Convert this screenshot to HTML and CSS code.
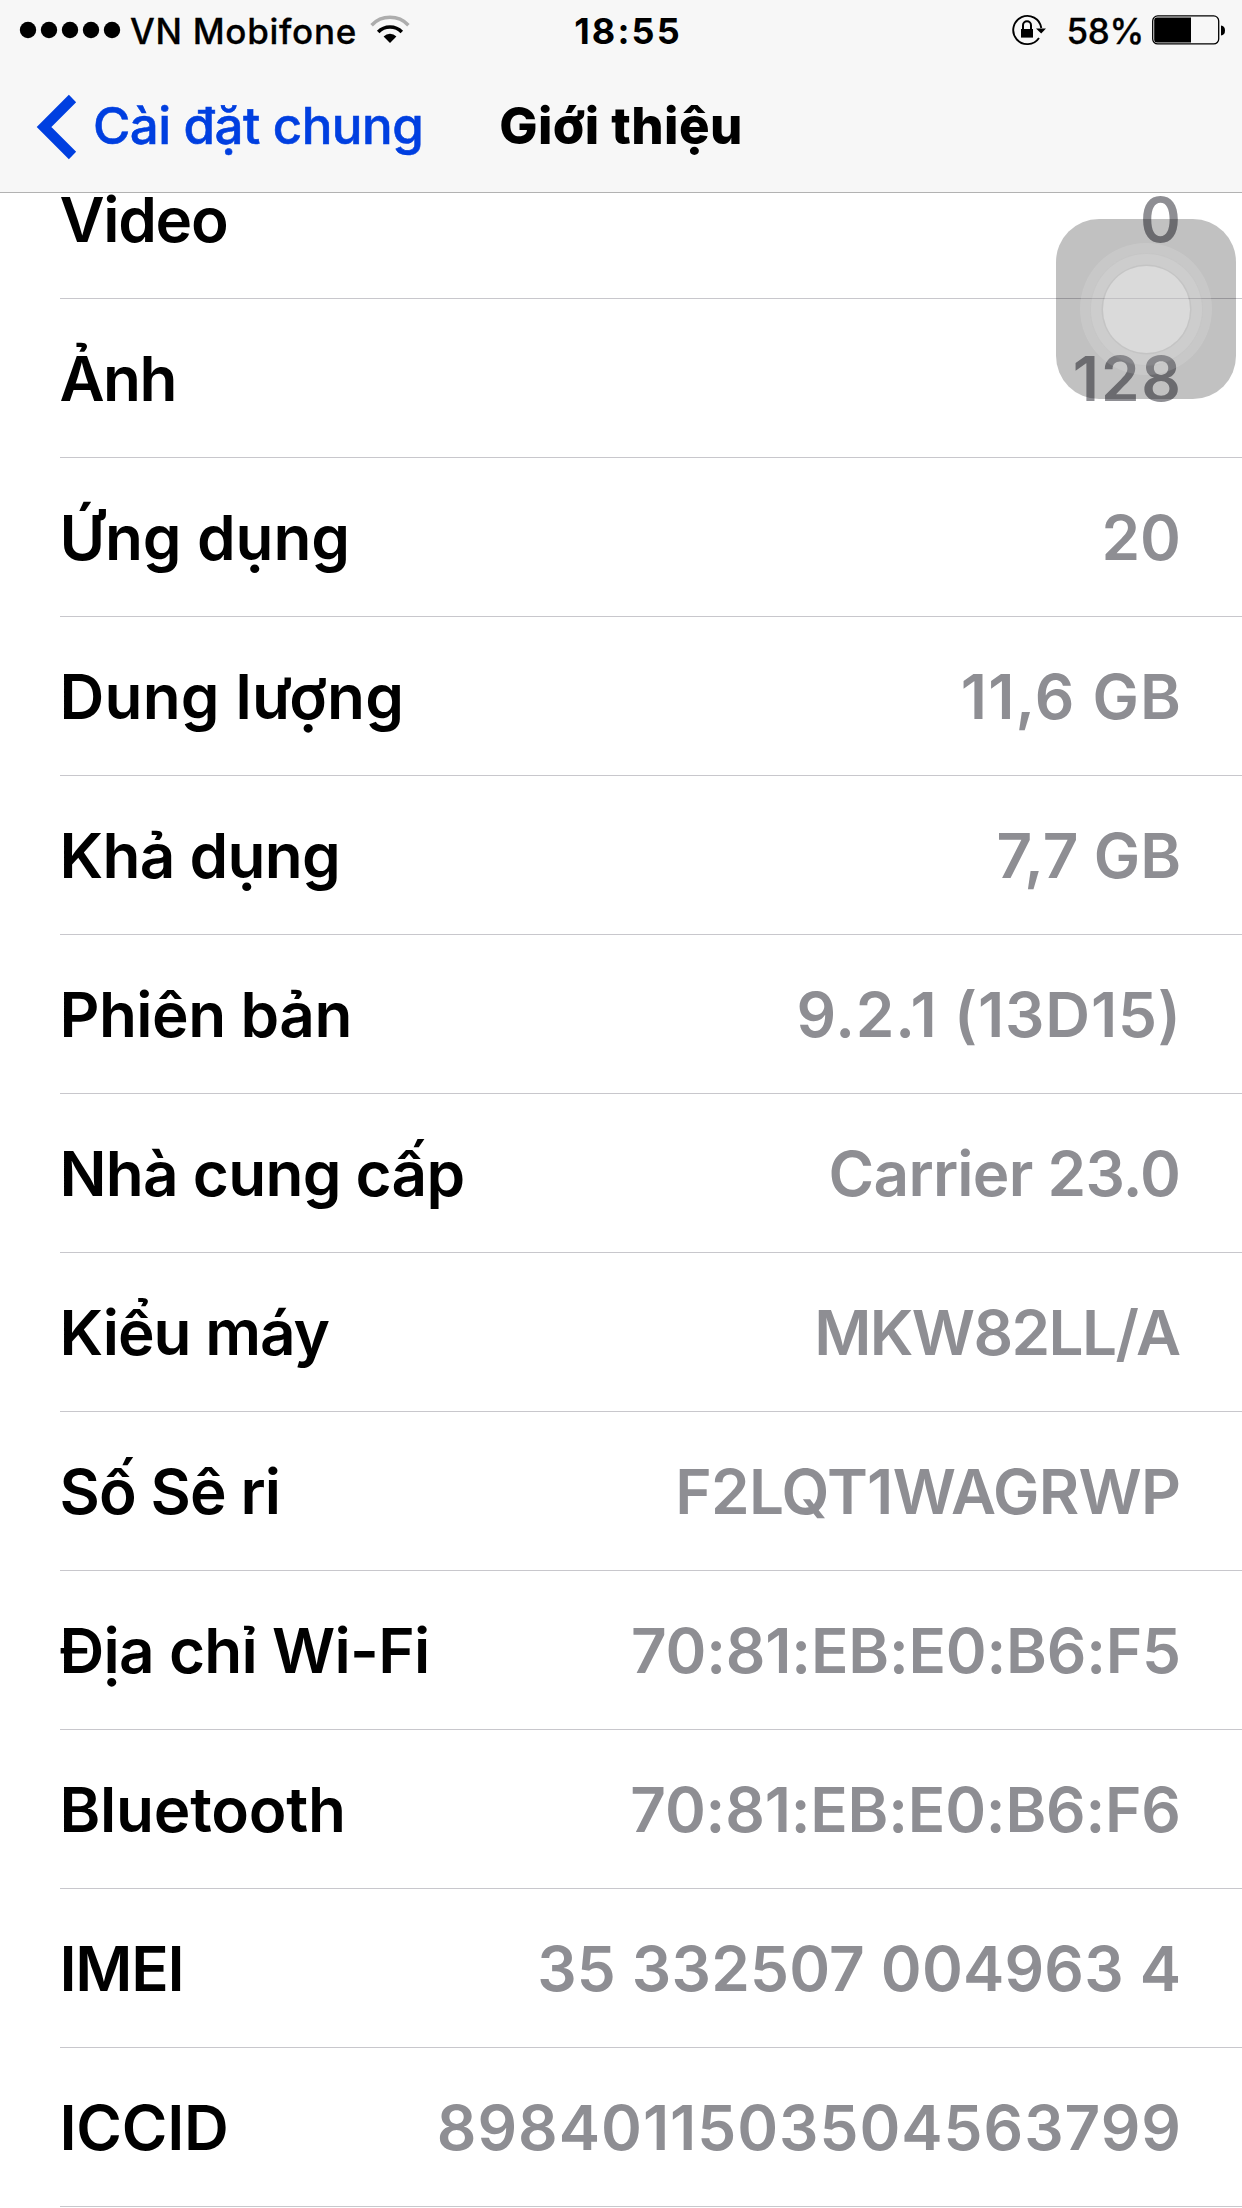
FILE: index.html
```html
<!DOCTYPE html>
<html lang="vi">
<head>
<meta charset="utf-8">
<title>Giới thiệu</title>
<link rel="stylesheet" href="styles.css">
</head>
<body>
<header class="header">
  <div class="status">
    <div class="status-left">
      <svg class="signal" width="104" height="18" viewBox="0 0 104 18"><circle cx="10" cy="9" r="8.2"/><circle cx="31" cy="9" r="8.2"/><circle cx="52" cy="9" r="8.2"/><circle cx="73" cy="9" r="8.2"/><circle cx="94" cy="9" r="8.2"/></svg>
      <span class="carrier">VN Mobifone</span>
      <svg class="wifi" width="40" height="30" viewBox="0 0 40 30" fill="none" stroke-width="3.5"><path d="M1.6 10.2A25.5 25.5 0 0 1 38.4 10.2" stroke="#adadad"/><path d="M8.2 17A16.4 16.4 0 0 1 31.8 17" stroke="#000"/><path d="M13.6 21.4A9.2 9.2 0 0 1 26.4 21.4L20 28Z" fill="#000"/></svg>
    </div>
    <span class="time">18:55</span>
    <div class="status-right">
      <svg class="lock" width="36" height="32" viewBox="0 0 36 32"><path d="M29.3 14A14.1 14.1 0 1 0 27 24" fill="none" stroke="#000" stroke-width="1.9"/><path d="M24 14.5H34L29.2 19.4Z"/><path d="M9 15h12v8.6H9z"/><path d="M11 15.5v-4.2a4 4 0 0 1 8 0v4.2" fill="none" stroke="#000" stroke-width="2"/></svg>
      <span class="percent">58%</span>
      <svg class="battery" width="74" height="30" viewBox="0 0 74 30"><rect x=".7" y=".9" width="66" height="28" rx="5" fill="none" stroke="#000" stroke-width="1.3"/><path d="M5 2.5H39V27.5H5Q2.2 27.5 2.2 24.5V5.5Q2.2 2.5 5 2.5Z"/><path d="M69 10.5Q73 11 73 15.5T69 20.5Z"/></svg>
    </div>
  </div>
  <nav class="nav">
    <a class="back">
      <svg class="chevron" width="42" height="66" viewBox="0 0 42 66"><path d="M37.5 4.5L9 33L37.5 61.5" fill="none" stroke="#003fe0" stroke-width="10.3"/></svg>
      <span class="back-label">Cài đặt chung</span>
    </a>
    <h1 class="title">Giới thiệu</h1>
  </nav>
</header>
<main class="content">
  <dl class="list">
    <div class="row row-video"><dt>Video</dt><dd>0</dd></div>
    <div class="row row-photos"><dt>Ảnh</dt><dd>128</dd></div>
    <div class="row row-apps"><dt>Ứng dụng</dt><dd>20</dd></div>
    <div class="row row-capacity"><dt>Dung lượng</dt><dd>11,6 GB</dd></div>
    <div class="row row-available"><dt>Khả dụng</dt><dd>7,7 GB</dd></div>
    <div class="row row-version"><dt>Phiên bản</dt><dd>9.2.1 (13D15)</dd></div>
    <div class="row row-carrier"><dt>Nhà cung cấp</dt><dd>Carrier 23.0</dd></div>
    <div class="row row-model"><dt>Kiểu máy</dt><dd>MKW82LL/A</dd></div>
    <div class="row row-serial"><dt>Số Sê ri</dt><dd>F2LQT1WAGRWP</dd></div>
    <div class="row row-wifi"><dt>Địa chỉ Wi-Fi</dt><dd>70:81:EB:E0:B6:F5</dd></div>
    <div class="row row-bluetooth"><dt>Bluetooth</dt><dd>70:81:EB:E0:B6:F6</dd></div>
    <div class="row row-imei"><dt>IMEI</dt><dd>35 332507 004963 4</dd></div>
    <div class="row row-iccid"><dt>ICCID</dt><dd>8984011503504563799</dd></div>
  </dl>
</main>
<div class="assistive"><div class="ring ring-outer"><div class="ring ring-middle"><div class="ring ring-inner"></div></div></div></div>
</body>
</html>
```
FILE: styles.css
```css
* { box-sizing: border-box; margin: 0; }
body {
  position: relative;
  width: 1242px;
  height: 2208px;
  background: #fff;
  color: #000;
  font-family: Inter, "Liberation Sans", sans-serif;
}
svg { display: block; flex: none; }

.header { height: 193px; background: #f7f7f7; border-bottom: 1px solid #b2b2b2; }
.status {
  display: grid;
  grid-template-columns: 1fr auto 1fr;
  align-items: center;
  height: 62px;
  padding: 0 16px 0 18px;
  font-size: 35px;
  font-weight: 500;
  line-height: 62px;
  white-space: nowrap;
}
.status-left, .status-right { display: flex; align-items: center; }
.status-left .signal { margin-top: -2px; }
.carrier { margin-left: 8px; letter-spacing: .7px; -webkit-text-stroke: .3px; }
.wifi { margin: -2px 0 0 13px; }
.time { padding-left: 12px; font-size: 36px; font-weight: 700; letter-spacing: 2.1px; }
.status-right { justify-content: flex-end; }
.lock { margin-right: 18px; margin-top: -2px; }
.percent { margin-right: 8px; letter-spacing: -.3px; -webkit-text-stroke: .3px; }
.battery { margin-top: -2px; }

.nav {
  display: grid;
  grid-template-columns: 1fr auto 1fr;
  align-items: center;
  height: 128px;
  padding: 0 35px;
  font-size: 51px;
  line-height: 60px;
  white-space: nowrap;
}
.back { display: flex; align-items: center; color: #003fe0; font-weight: 500; }
.chevron { margin-top: 1px; }
.back-label { margin-left: 16px; letter-spacing: -.55px; -webkit-text-stroke: .6px; }
.title { font-size: 51px; font-weight: 800; letter-spacing: .4px; }

.content { height: 2015px; }
.list { margin-left: 60px; }
.row {
  display: flex;
  justify-content: space-between;
  align-items: center;
  height: 159px;
  padding: 2px 61px 0 0;
  border-bottom: 1px solid #c8c7cc;
  font-size: 62px;
  font-weight: 600;
  line-height: 76px;
  white-space: nowrap;
}
.row dt { margin-left: -.5px; letter-spacing: var(--label-track, 0); }
.row dd {
  margin-right: calc(-1 * var(--value-track, 0px));
  color: #8e8e93;
  letter-spacing: var(--value-track, 0);
}
/* First row, scrolled partly under the header */
.row-video {
  --label-track: -1.3px;
  align-items: flex-start;
  height: 106px;
  padding-top: 0;
  line-height: 54px;
}
.row-photos { --label-track: -1.5px; --value-track: 1.8px; }
.row-apps { --label-track: -.1px; }
.row-capacity { --label-track: .2px; --value-track: 1.2px; }
.row-available { --label-track: -.7px; --value-track: -.1px; }
.row-version { --label-track: -.55px; --value-track: .85px; }
.row-carrier { --label-track: -.73px; --value-track: -.74px; }
.row-model { --label-track: -1px; --value-track: -1.6px; }
.row-serial { --label-track: -.9px; --value-track: -.7px; }
.row-wifi { --label-track: -.7px; --value-track: -.2px; }
.row-bluetooth { --label-track: -.25px; --value-track: -.2px; }
.row-imei { --label-track: -1.3px; --value-track: .2px; }
.row-iccid { --label-track: -.3px; --value-track: .97px; }

/* Floating touch button above the list */
.assistive {
  position: absolute;
  top: 219px;
  left: 1056px;
  display: grid;
  place-items: center;
  width: 180px;
  height: 180px;
  border-radius: 43px;
  background: rgba(0, 0, 0, .245);
}
.ring { display: grid; place-items: center; border-radius: 50%; }
.ring-outer { width: 132px; height: 132px; background: rgba(255, 255, 255, .125); }
.ring-middle { width: 113px; height: 113px; background: rgba(255, 255, 255, .09); box-shadow: inset 0 0 0 1px rgba(0, 0, 0, .03); }
.ring-inner { width: 87px; height: 87px; background: rgba(255, 255, 255, .26); box-shadow: 0 0 0 1.5px rgba(0, 0, 0, .04); }
```
